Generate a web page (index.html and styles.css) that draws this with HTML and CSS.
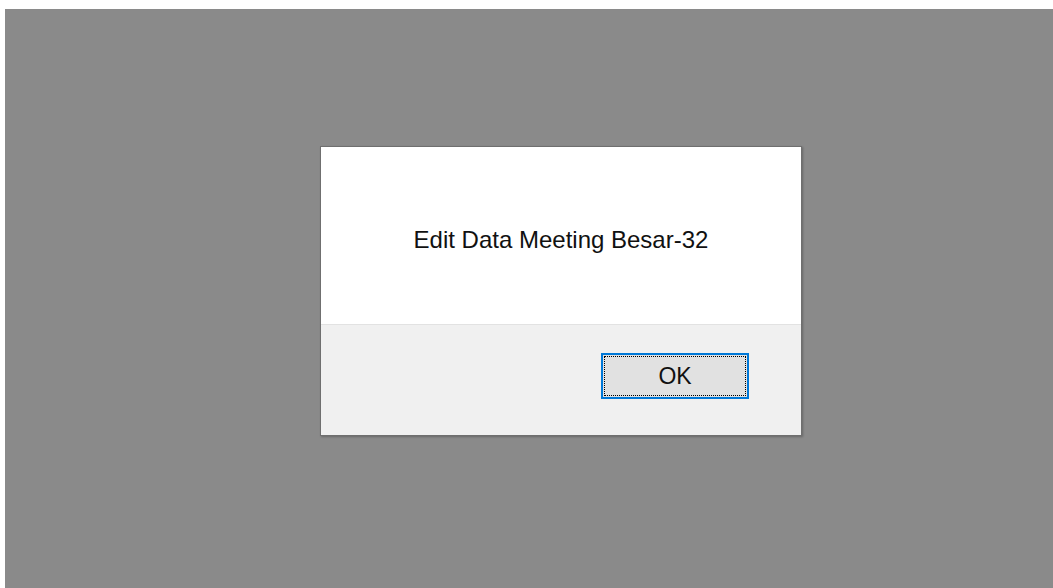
FILE: index.html
```html
<!DOCTYPE html>
<html>
<head>
<meta charset="utf-8">
<title>Edit Data Meeting</title>
<link rel="stylesheet" href="styles.css">
</head>
<body>
<div class="backdrop">
  <div class="dialog">
    <div class="dialog-body">
      <p class="message">Edit Data Meeting Besar-32</p>
    </div>
    <div class="dialog-footer">
      <button class="btn-ok" type="button">OK</button>
    </div>
  </div>
</div>
</body>
</html>
```
FILE: styles.css
```css
html, body {
  margin: 0;
  height: 100%;
  background: #ffffff;
}

body {
  padding: 9px 0 0 5px;
  box-sizing: border-box;
  font-family: "Liberation Sans", Arial, sans-serif;
}

.backdrop {
  height: 100%;
  background: #8a8a8a;
  padding: 137px 0 0 315px;
  box-sizing: border-box;
}

.dialog {
  width: 482px;
  height: 290px;
  box-sizing: border-box;
  border: 1px solid #6f6f6f;
  background: #ffffff;
  display: flex;
  flex-direction: column;
  box-shadow: 1px 1px 2px rgba(0, 0, 0, 0.25);
}

.dialog-body {
  height: 177px;
  display: flex;
  justify-content: center;
  align-items: flex-start;
  border-bottom: 1px solid #e2e2e2;
}

.message {
  margin: 80px 0 0 0;
  font-size: 24px;
  line-height: 26px;
  color: #111111;
}

.dialog-footer {
  flex: 1;
  background: #f0f0f0;
  display: flex;
  justify-content: flex-end;
  align-items: flex-start;
  padding: 28px 52px 0 0;
}

.btn-ok {
  width: 148px;
  height: 46px;
  box-sizing: border-box;
  border: 2px solid #0078d7;
  background: #e1e1e1;
  outline: 1px dotted #000000;
  outline-offset: -4px;
  font-family: "Liberation Sans", Arial, sans-serif;
  font-size: 23px;
  color: #111111;
  padding: 0;
}
```
